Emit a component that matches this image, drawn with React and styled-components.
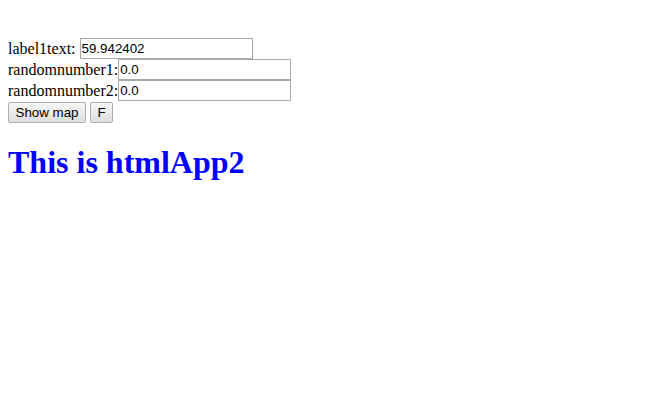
import React from "react";
import styled, { createGlobalStyle } from "styled-components";

const GlobalStyle = createGlobalStyle`
  body {
    margin: 8px;
    background: #fff;
    font-family: "Liberation Serif", "Times New Roman", serif;
    font-size: 16px;
    color: #000;
  }
`;

const Page = styled.div`
  padding-top: 30px;
`;

const Form = styled.div`
  display: flex;
  flex-direction: column;
`;

const Row = styled.div`
  display: flex;
  align-items: center;
  height: 21px;
`;

const Label = styled.span`
  margin-right: ${(p) => (p.spaced ? "4px" : "0")};
  line-height: 18px;
`;

const Field = styled.input`
  box-sizing: border-box;
  width: 173px;
  height: 21px;
  margin: 0;
  padding: 1px 1px;
  border: 1px solid #a9a9a9;
  font-family: "Liberation Sans", Arial, sans-serif;
  font-size: 13.33px;
  color: #000;
  outline: none;
`;

const Buttons = styled.div`
  display: flex;
  gap: 4px;
  margin-top: 1px;
`;

const Button = styled.button`
  box-sizing: border-box;
  height: 21px;
  margin: 0;
  padding: 0 6.5px;
  border: 1px solid #adadad;
  border-radius: 2px;
  background: linear-gradient(#f6f6f6, #dedede);
  font-family: "Liberation Sans", Arial, sans-serif;
  font-size: 13.33px;
  color: #000;
`;

const Heading = styled.h1`
  margin: 21px 0;
  font-size: 32px;
  font-weight: bold;
  color: #0000ff;
`;

export default function App() {
  return (
    <Page>
      <GlobalStyle />
      <Form>
        <Row>
          <Label spaced>label1text:</Label>
          <Field defaultValue="59.942402" />
        </Row>
        <Row>
          <Label>randomnumber1:</Label>
          <Field defaultValue="0.0" />
        </Row>
        <Row>
          <Label>randomnumber2:</Label>
          <Field defaultValue="0.0" />
        </Row>
        <Buttons>
          <Button>Show map</Button>
          <Button>F</Button>
        </Buttons>
      </Form>
      <Heading>This is htmlApp2</Heading>
    </Page>
  );
}
